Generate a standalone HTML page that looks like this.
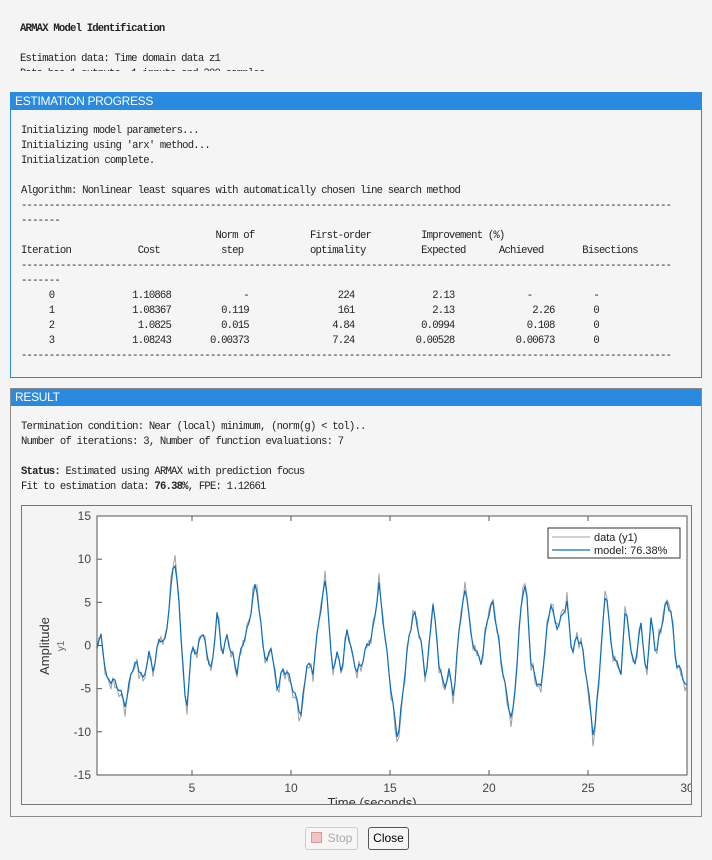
<!DOCTYPE html>
<html><head><meta charset="utf-8"><style>
body{margin:0;width:712px;height:860px;background:#f4f4f4;position:relative;overflow:hidden;font-family:"Liberation Sans",sans-serif}
pre{margin:0;font-family:"Liberation Mono",monospace;font-size:10.6px;letter-spacing:-0.8px;line-height:15px;color:#222}
#top{position:absolute;left:20px;top:22px;width:680px;height:49px;overflow:hidden}
.panel{position:absolute;left:10px;width:690px;border:1px solid #8a8a8a;background:#f5f5f5}
.hd{background:#2a8ae0;color:#fff;font-size:12px;height:17px;line-height:17px;padding-left:4px;letter-spacing:-0.3px}
.btn{position:absolute;top:827px;height:21px;border:1px solid #555;border-radius:3px;font-size:12px;line-height:21px;text-align:center;background:#f6f6f6}
</style></head><body>
<div id="top"><pre><b>ARMAX Model Identification</b>

Estimation data: Time domain data z1
Data has 1 outputs, 1 inputs and 300 samples</pre></div>

<div class="panel" style="top:92px;height:284px;border-color:#2a8ae0">
<div class="hd">ESTIMATION PROGRESS</div>
<pre id="p1" style="position:absolute;left:10px;top:31px"></pre>
</div>

<div class="panel" style="top:388px;height:427px">
<div class="hd">RESULT</div>
<pre style="position:absolute;left:10px;top:31px">Termination condition: Near (local) minimum, (norm(g) &lt; tol)..
Number of iterations: 3, Number of function evaluations: 7

<b>Status:</b> Estimated using ARMAX with prediction focus
Fit to estimation data: <b>76.38%</b>, FPE: 1.12661</pre>
</div>

<div style="position:absolute;left:21px;top:505px;width:669px;height:298px;border:1px solid #777;overflow:hidden;background:#f4f4f4">
<svg id="sv" width="669" height="298" style="position:absolute;left:0;top:0" font-family="Liberation Sans, sans-serif"></svg>
</div>

<div class="btn" style="left:305px;width:51px;border-color:#ccc;color:#aaa"><span style="display:inline-block;width:9px;height:9px;background:#f1c4c4;border:1px solid #d99;vertical-align:-1px;margin-right:6px"></span>Stop</div>
<div class="btn" style="left:368px;width:39px">Close</div>

<script>
function line(parts){var a=[];for(var i=0;i<120;i++)a.push(' ');parts.forEach(function(p){var s=p[0],st=p[2]?p[1]:p[1]-s.length;for(var i=0;i<s.length;i++)a[st+i]=s[i];});return a.join('').replace(/\s+$/,'');}
var D='-'.repeat(117);
var rows=[['0','1.10868','-','224','2.13','-','-'],['1','1.08367','0.119','161','2.13','2.26','0'],['2','1.0825','0.015','4.84','0.0994','0.108','0'],['3','1.08243','0.00373','7.24','0.00528','0.00673','0']];
var L=["Initializing model parameters...","Initializing using 'arx' method...","Initialization complete.","","Algorithm: Nonlinear least squares with automatically chosen line search method",D,"-------",
line([["Norm of",35,1],["First-order",52,1],["Improvement (%)",72,1]]),
line([["Iteration",0,1],["Cost",21,1],["step",36,1],["optimality",52,1],["Expected",72,1],["Achieved",86,1],["Bisections",101,1]]),D,"-------"];
rows.forEach(function(r){L.push(line([[r[0],6],[r[1],27],[r[2],r[2]=='-'?40:41,r[2]=='-'],[r[3],60],[r[4],78],[r[5],r[5]=='-'?91:96,r[5]=='-'],[r[6],103,1]]));});
L.push(D);
document.getElementById('p1').textContent=L.join('\n');

var ox=21,oy=505;
var ax0=96-ox,ay0=515-oy,ax1=686-ox,ay1=774-oy;
var Y=function(v){return (644.5-oy)-v*8.63};
var kp=[[96,0],[100,1],[106,-4],[112,-4],[118,-5],[125,-7],[130,-3],[136,-2],[142,-4],[148,-1],[153,-3],[158,1],[163,0],[168,4],[173,10.5],[178,5],[185,-8],[191,0],[196,-1],[201,2],[206,-1],[211,-3],[216,4],[221,-1],[226,1],[231,-1],[236,-3],[241,0],[247,2],[255,7.5],[262,0],[266,-2],[270,0],[276,-5],[281,-3],[286,-3],[292,-5],[300,-8],[306,-2],[312,-3],[318,3],[325,8],[331,-3],[336,-1],[341,-3],[346,2],[351,-1],[356,-3],[361,-2],[366,0],[371,1],[378,7],[383,2],[388,-3],[392,-7],[397,-11],[403,-4],[408,1],[413,4],[419,1],[425,-4],[432,5],[438,-2],[443,-5],[448,-3],[453,-6],[458,2],[465,7],[470,1],[476,-1],[481,-2],[486,3],[492,5],[497,1],[503,-4],[511,-9],[516,-2],[521,6],[525,7],[530,-2],[535,-4],[540,-5],[545,1],[550,5],[555,2],[560,3],[566,5],[571,-1],[576,1],[581,0],[586,-4],[593,-11],[599,-2],[605,7],[610,0],[615,-2],[620,-3],[625,5],[630,-1],[635,-2],[640,3],[645,-4],[650,3],[655,-1],[660,2],[665,5],[670,4],[675,-2],[680,-3],[686,-5]];
function interp(x){for(var i=1;i<kp.length;i++){if(x<=kp[i][0]){var a=kp[i-1],b=kp[i];return a[1]+(b[1]-a[1])*(x-a[0])/(b[0]-a[0]);}}return kp[kp.length-1][1];}
var m=[],d=[];
for(var x=96;x<=686;x+=2){var v=interp(x)+0.4*Math.sin(x*0.9);m.push((x-ox)+','+Y(v).toFixed(1));var w=v*1.08+0.6*Math.sin(x*1.3+1);d.push((x-ox)+','+Y(w).toFixed(1));}
var s='';
s+='<rect x="'+ax0+'" y="'+ay0+'" width="'+(ax1-ax0)+'" height="'+(ay1-ay0)+'" fill="#fff" stroke="#555"/>';
s+='<clipPath id="c"><rect x="'+ax0+'" y="'+ay0+'" width="'+(ax1-ax0)+'" height="'+(ay1-ay0)+'"/></clipPath>';
s+='<g clip-path="url(#c)"><polyline points="'+d.join(' ')+'" fill="none" stroke="#a0a0a0" stroke-width="1"/><polyline points="'+m.join(' ')+'" fill="none" stroke="#0b6fc0" stroke-width="1.2"/></g>';
[15,10,5,0,-5,-10,-15].forEach(function(v){var y=Y(v);s+='<line x1="'+ax0+'" x2="'+(ax0+5)+'" y1="'+y+'" y2="'+y+'" stroke="#555"/><text x="'+(ax0-6)+'" y="'+(y+4)+'" font-size="12" fill="#444" text-anchor="end">'+v+'</text>';});
[5,10,15,20,25,30].forEach(function(t){var x=ax0+(t)*19.8-4;s+='<line x1="'+x+'" x2="'+x+'" y1="'+ay1+'" y2="'+(ay1-5)+'" stroke="#555"/><line x1="'+x+'" x2="'+x+'" y1="'+ay0+'" y2="'+(ay0+5)+'" stroke="#555"/><text x="'+x+'" y="'+(ay1+17)+'" font-size="12" fill="#444" text-anchor="middle">'+t+'</text>';});
s+='<text x="'+(371-ox)+'" y="'+(806-oy)+'" font-size="13" fill="#333" text-anchor="middle">Time (seconds)</text>';
s+='<text transform="translate('+(48-ox)+','+(645-oy)+') rotate(-90)" font-size="13" fill="#333" text-anchor="middle">Amplitude</text>';
s+='<text transform="translate('+(63-ox)+','+(645-oy)+') rotate(-90)" font-size="10" fill="#666" text-anchor="middle">y1</text>';
var lx=547-ox,ly=527-oy;
s+='<rect x="'+lx+'" y="'+ly+'" width="132" height="30" fill="#fff" stroke="#333"/>';
s+='<line x1="'+(lx+4)+'" x2="'+(lx+42)+'" y1="'+(ly+9)+'" y2="'+(ly+9)+'" stroke="#a0a0a0"/><text x="'+(lx+46)+'" y="'+(ly+13)+'" font-size="11" fill="#222">data (y1)</text>';
s+='<line x1="'+(lx+4)+'" x2="'+(lx+42)+'" y1="'+(ly+22)+'" y2="'+(ly+22)+'" stroke="#0b6fc0" stroke-width="1.2"/><text x="'+(lx+46)+'" y="'+(ly+26)+'" font-size="11" fill="#222">model: 76.38%</text>';
document.getElementById('sv').innerHTML=s;
</script>
</body></html>
